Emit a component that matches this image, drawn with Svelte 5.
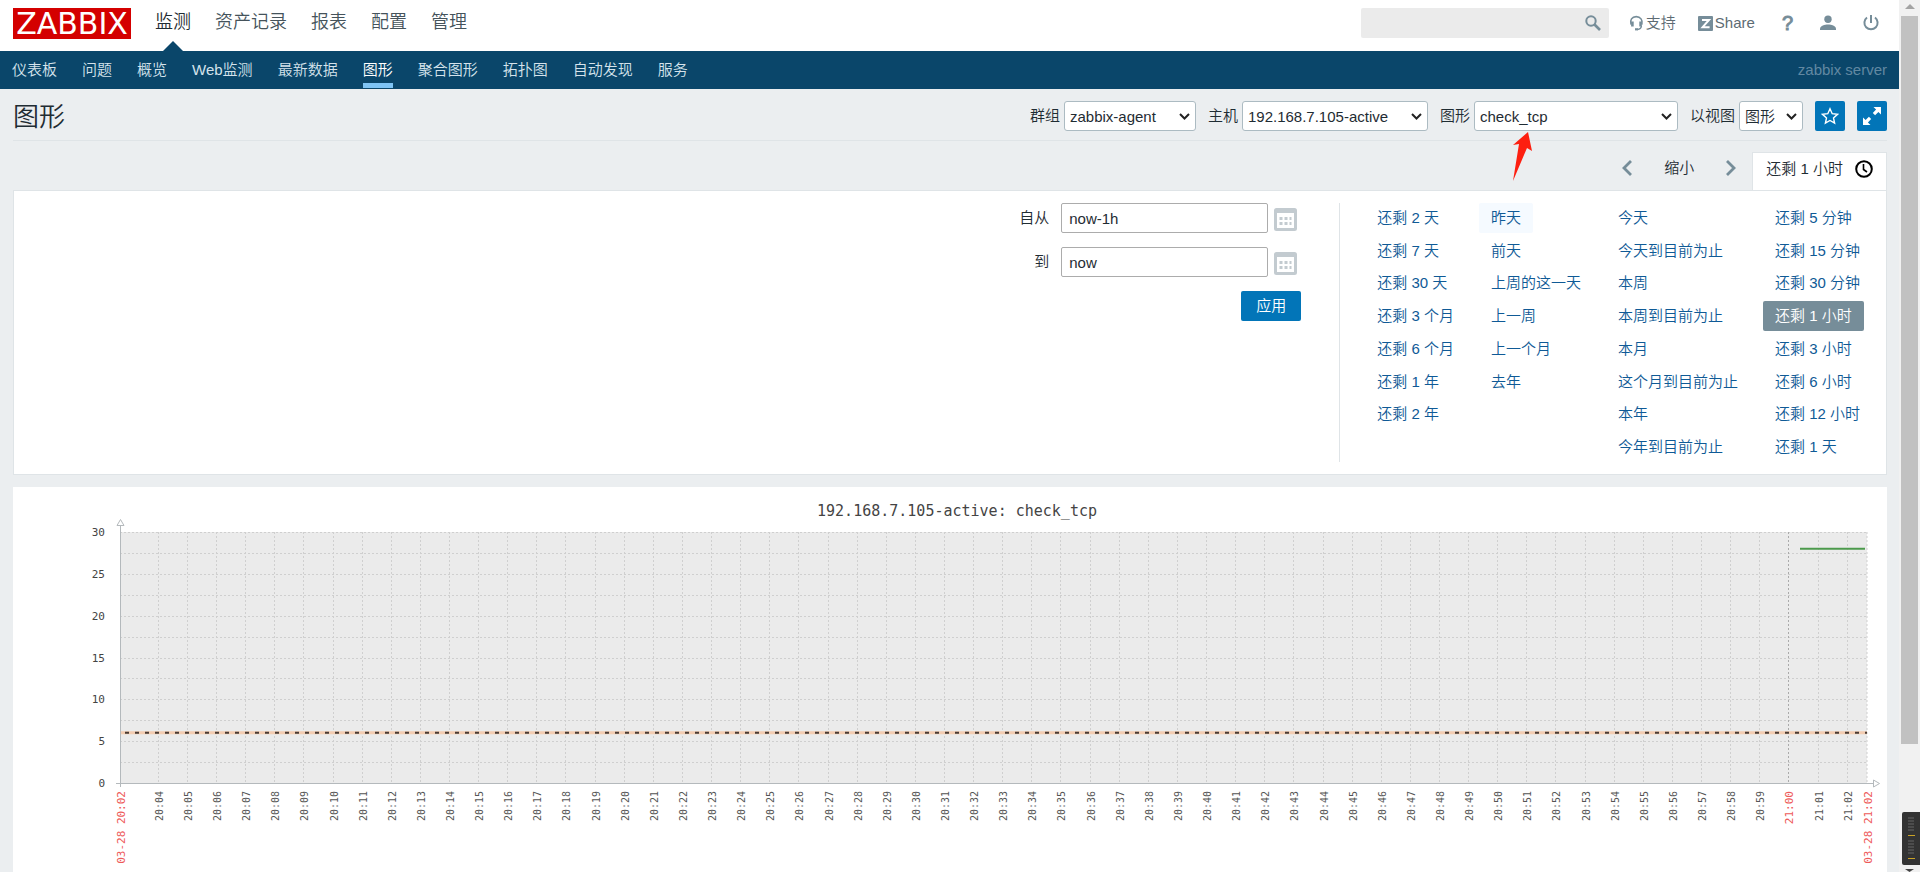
<script>
  const mainMenu = ["监测", "资产记录", "报表", "配置", "管理"];
  const subMenu = [
    "仪表板",
    "问题",
    "概览",
    "Web监测",
    "最新数据",
    "图形",
    "聚合图形",
    "拓扑图",
    "自动发现",
    "服务",
  ];

  const filters = [
    { id: "group", label: "群组", value: "zabbix-agent" },
    { id: "host", label: "主机", value: "192.168.7.105-active" },
    { id: "graph", label: "图形", value: "check_tcp" },
    { id: "view", label: "以视图", value: "图形" },
  ];

  const periods = [
    ["还剩 2 天", "还剩 7 天", "还剩 30 天", "还剩 3 个月", "还剩 6 个月", "还剩 1 年", "还剩 2 年"],
    ["昨天", "前天", "上周的这一天", "上一周", "上一个月", "去年"],
    ["今天", "今天到目前为止", "本周", "本周到目前为止", "本月", "这个月到目前为止", "本年", "今年到目前为止"],
    ["还剩 5 分钟", "还剩 15 分钟", "还剩 30 分钟", "还剩 1 小时", "还剩 3 小时", "还剩 6 小时", "还剩 12 小时", "还剩 1 天"],
  ];

  let from = $state("now-1h");
  let to = $state("now");
  let period = $state("还剩 1 小时");

  // graph geometry
  let graphWidth = $state(1874);
  const left = 107;
  const top = 45;
  const bottom = 296;
  let right = $derived(graphWidth - 20);
  let minute = $derived((right - left) / 60);

  const y = (v) => bottom - (v * (bottom - top)) / 30;
  const pad = (n) => String(n).padStart(2, "0");

  const rows = Array.from({ length: 12 }, (_, i) => (i + 1) * 2.5);
  const scale = [0, 5, 10, 15, 20, 25, 30];

  // one tick per minute, 20:04 - 21:02
  let ticks = $derived(
    Array.from({ length: 59 }, (_, i) => {
      const m = 20 * 60 + 4 + i;
      return {
        x: Math.round(left + (i + 1.3) * minute) + 0.5,
        text: `${pad(Math.floor(m / 60))}:${pad(m % 60)}`,
        major: m % 60 === 0,
      };
    })
  );
</script>

<div class="window">
  <div class="page">
    <header>
      <a class="logo" href="#home">ZABBIX</a>
      <nav class="main-menu">
        {#each mainMenu as item, i}
          <a href="#main" class:active={i === 0}>{item}</a>
        {/each}
      </nav>
      <div class="user-tools">
        <form class="search">
          <input type="text" aria-label="search" />
          <button type="button" aria-label="search">
            <svg width="16" height="16" viewBox="0 0 16 16">
              <circle cx="6" cy="6" r="4.7" fill="none" stroke="#768d99" stroke-width="2" />
              <path d="M9.5 9.5L15 15" stroke="#768d99" stroke-width="2.6" />
            </svg>
          </button>
        </form>
        <a class="support" href="#support">
          <svg width="15" height="16" viewBox="0 0 15 16" fill="none" stroke="#768d99">
            <path d="M2 9.5C.6 5 3 1.6 7.2 1.6S14 5 12.9 9.5" stroke-width="1.6" />
            <path d="M3.4 6.6v5M11.6 6.6v5" stroke-width="2.6" />
            <path d="M12.4 11c-.3 2.4-1.6 3.3-4 3.4" stroke-width="1.5" />
            <path d="M6 14.3h3" stroke-width="2.2" />
          </svg>支持
        </a>
        <a class="share" href="#share">
          <svg width="15" height="15" viewBox="0 0 15 15">
            <rect width="15" height="15" rx="1" fill="#768d99" />
            <path d="M4 4h7L4.6 11.2h7" fill="none" stroke="#fff" stroke-width="2" />
          </svg>Share
        </a>
        <a class="help" href="#help">?</a>
        <a href="#profile" aria-label="profile">
          <svg width="16" height="16" viewBox="0 0 16 16" fill="#768d99">
            <circle cx="8" cy="4.2" r="3.7" />
            <path d="M0 15v-1.5C.5 10.8 4.5 9.6 8 9.6s7.5 1.2 8 3.9V15z" />
          </svg>
        </a>
        <a href="#logout" aria-label="logout">
          <svg width="16" height="16" viewBox="0 0 16 16" fill="none" stroke="#768d99" stroke-width="2">
            <path d="M4 2.5a6.6 6.6 0 1 0 8 0M8 0v8" />
          </svg>
        </a>
      </div>
    </header>

    <nav class="sub-menu">
      {#each subMenu as item}
        <a href="#sub" class:active={item === "图形"}>{item}</a>
      {/each}
      <span class="server">zabbix server</span>
    </nav>

    <main>
      <div class="title-row">
        <h1>图形</h1>
        <form class="filters">
          {#each filters as f}
            <div class="filter">
              <label for={f.id}>{f.label}</label>
              <span class="select {f.id}">
                <select id={f.id}>
                  <option>{f.value}</option>
                </select>
                <svg width="11" height="7" viewBox="0 0 11 7">
                  <path d="M1 1l4.5 4.5L10 1" fill="none" stroke="#222" stroke-width="2" />
                </svg>
              </span>
              {#if f.id === "graph"}
                <svg class="pointer" width="20" height="52" viewBox="0 0 20 52">
                  <path d="M16 1L1 14l6-1L1 50 15 17l5 3z" fill="#fd1f10" />
                </svg>
              {/if}
            </div>
          {/each}
          <button type="button" class="icon-btn" aria-label="favourite">
            <svg width="18" height="18" viewBox="0 0 18 18">
              <path
                d="M9 1.8l2.2 4.9 5.3.6-4 3.6 1.1 5.2L9 13.5l-4.600 2.600 1.100-5.200-4-3.600 5.300-.6z"
                fill="none"
                stroke="#fff"
                stroke-width="1.4"
              />
            </svg>
          </button>
          <button type="button" class="icon-btn" aria-label="fullscreen">
            <svg width="18" height="18" viewBox="0 0 18 18" fill="#fff">
              <path d="M10.5 0H18v7.5l-2.600-2.600-3.300 3.300-2.300-2.300 3.300-3.300zM7.500 18H0v-7.500l2.600 2.600 3.300-3.300 2.300 2.300-3.300 3.300z" />
            </svg>
          </button>
        </form>
      </div>

      <div class="time-tabs">
        <button type="button" aria-label="previous">
          <svg width="10" height="16" viewBox="0 0 10 16">
            <path d="M9 1L2 8l7 7" fill="none" stroke="#768d99" stroke-width="2.8" />
          </svg>
        </button>
        <button type="button">缩小</button>
        <button type="button" aria-label="next">
          <svg width="10" height="16" viewBox="0 0 10 16">
            <path d="M1 1l7 7-7 7" fill="none" stroke="#768d99" stroke-width="2.8" />
          </svg>
        </button>
        <a class="time-tab" href="#time">
          {period}
          <svg width="18" height="18" viewBox="0 0 18 18" fill="none" stroke="#000" stroke-width="2">
            <circle cx="9" cy="9" r="7.8" />
            <path d="M8.5 4v5.5l3.5 2.5" stroke-width="1.6" />
          </svg>
        </a>
      </div>

      <section class="time-panel">
        <form class="range">
          <label for="from">自从</label>
          <input id="from" type="text" bind:value={from} />
          {@render calendar()}
          <label for="to">到</label>
          <input id="to" type="text" bind:value={to} />
          {@render calendar()}
          <button type="button" class="apply">应用</button>
        </form>
        <div class="periods">
          {#each periods as column}
            <ul>
              {#each column as p}
                <li>
                  <a
                    href="#period"
                    class:selected={p === period}
                    class:hovered={p === "昨天"}
                    onclick={() => (period = p)}>{p}</a
                  >
                </li>
              {/each}
            </ul>
          {/each}
        </div>
      </section>

      <section class="graph" bind:clientWidth={graphWidth}>
        <svg width={graphWidth} height="400">
          <text class="graph-title" x={graphWidth / 2 + 7} y="29">192.168.7.105-active: check_tcp</text>
          <rect x={left} y={top} width={right - left} height={bottom - top} fill="#ebebeb" />

          {#each rows as v}
            <line class="grid" x1={left} x2={right} y1={Math.round(y(v)) + 0.5} y2={Math.round(y(v)) + 0.5} />
          {/each}
          {#each ticks as t}
            <line class="grid" class:major={t.major} x1={t.x} x2={t.x} y1={top} y2={bottom} />
            <text
              class="tick"
              class:major={t.major}
              transform="translate({t.x + 4} {bottom + 8}) rotate(-90)">{t.text}</text
            >
          {/each}
          <line class="grid" x1={right} x2={right} y1={top} y2={bottom} />

          {#each scale as v}
            <text class="value" x="92" y={Math.round(y(v)) + 4}>{v}</text>
          {/each}

          <text class="tick major" transform="translate({left + 5} {bottom + 8}) rotate(-90)">03-28 20:02</text>
          <text class="tick major" transform="translate({right + 5} {bottom + 8}) rotate(-90)">03-28 21:02</text>

          <!-- trigger -->
          <line x1={left} x2={right} y1={y(6)} y2={y(6)} stroke="#f3cdb2" stroke-width="3" />
          <line
            x1={left + 5}
            x2={right}
            y1={y(6)}
            y2={y(6)}
            stroke="#4a3b33"
            stroke-width="2"
            stroke-dasharray="4 6"
          />
          <!-- data -->
          <line x1={right - 67} x2={right - 2} y1={y(28)} y2={y(28)} stroke="#4c9a4c" stroke-width="2" />

          <path class="axis" d="M{left}.5 38V{bottom + 4}M{left - 4} {bottom}.5H{right + 6}" />
          <path class="arrow" d="M{left - 3} 38.5h7l-3.5-6z" />
          <path class="arrow" d="M{right + 6}.5 {bottom - 3}v7l6-3.5z" />
        </svg>
      </section>
    </main>
  </div>

  <div class="scrollbar">
    <span class="scroll-up"></span>
    <span class="thumb"></span>
  </div>
  <svg class="meter" width="18" height="60" viewBox="0 0 18 60">
    <rect width="22" height="53" rx="2" fill="#333" />
    <path d="M6 6h6M6 9h6M6 12h6M6 15h6M6 18h6M6 29h6M6 32h6M6 35h6M6 38h6M6 41h6" stroke="#666" />
    <path d="M6 23.5h7M6 46.5h7" stroke="#c9a227" />
    <path d="M3 57h9l-4.5 3z" fill="#444" />
  </svg>
</div>

{#snippet calendar()}
  <button type="button" class="calendar" aria-label="calendar">
    <svg width="23" height="23" viewBox="0 0 23 23">
      <rect x="1.5" y="1.5" width="20" height="20" rx="1" fill="#fff" stroke="#c3cbd0" stroke-width="3" />
      <path d="M1 3h21" stroke="#c3cbd0" stroke-width="4" />
      <path d="M5.5 10.5h12M5.5 15.5h12" stroke="#c3cbd0" stroke-width="3" stroke-dasharray="3 2" />
    </svg>
  </button>
{/snippet}

<style>
  :global(body) {
    margin: 0;
    background: #ebeef0;
    color: #1f2c33;
    font-family: "Liberation Sans", "Noto Sans CJK SC", sans-serif;
    font-size: 15px;
    font-weight: 350;
    line-height: 20px;
  }

  .window {
    display: flex;
    height: 100vh;
    overflow: hidden;
  }

  .page {
    flex: 1;
    min-width: 0;
  }

  a {
    color: inherit;
    text-decoration: none;
  }

  button,
  input,
  select {
    font: inherit;
    color: inherit;
    box-sizing: border-box;
  }

  button {
    border: 0;
    padding: 0;
    background: none;
    cursor: pointer;
  }

  svg {
    display: block;
  }

  header {
    display: flex;
    align-items: flex-start;
    height: 51px;
    padding: 0 20px 0 13px;
    background: #fff;
    box-sizing: border-box;
  }

  .logo {
    width: 118px;
    height: 31px;
    margin: 8px 24px 0 0;
    background: #d40000;
    color: #fff;
    font-family: "DejaVu Sans", sans-serif;
    font-size: 30px;
    font-weight: 400;
    line-height: 31px;
    text-align: center;
  }

  .main-menu {
    display: flex;
    flex: 1;
    gap: 24px;
    font-size: 18px;
    color: #45535b;
  }

  .main-menu a {
    height: 51px;
    line-height: 45px;
  }

  .main-menu .active {
    position: relative;
    color: #1f2c33;
  }

  .main-menu .active::after {
    content: "";
    position: absolute;
    bottom: 0;
    left: 50%;
    margin-left: -10px;
    border: 10px solid transparent;
    border-top: 0;
    border-bottom-color: #0a466a;
  }

  .user-tools {
    display: flex;
    align-items: center;
    height: 30px;
    margin-top: 8px;
    color: #5d6b73;
  }

  .user-tools a {
    margin-right: 27px;
  }

  .user-tools a:last-child {
    margin-right: 0;
  }

  .search {
    display: flex;
    align-items: center;
    width: 248px;
    margin-right: 20px;
    background: #ebebeb;
    border-radius: 2px;
  }

  .search input {
    flex: 1;
    min-width: 0;
    height: 30px;
    border: 0;
    background: none;
  }

  .search button {
    margin-right: 8px;
  }

  .support,
  .share {
    display: flex;
    align-items: center;
    gap: 2px;
  }

  .user-tools .support {
    margin-right: 22px;
  }

  .user-tools .help {
    color: #768d99;
    font-size: 20px;
    -webkit-text-stroke: 1px #768d99;
  }

  .sub-menu {
    display: flex;
    gap: 25px;
    height: 38px;
    padding: 0 12px;
    background: #0a466a;
    color: #d5e3ec;
    line-height: 37px;
  }

  .sub-menu .active {
    height: 32px;
    border-bottom: 5px solid #7ec4f5;
    color: #fff;
  }

  .server {
    margin-left: auto;
    color: #6289a2;
  }

  main {
    padding: 0 12px 0 13px;
  }

  .title-row {
    display: flex;
    justify-content: space-between;
    height: 51px;
    border-bottom: 1px solid #dfe4e7;
  }

  h1 {
    margin: 0;
    font-size: 26px;
    font-weight: 350;
    line-height: 57px;
  }

  .filters {
    display: flex;
    gap: 12px;
    padding-top: 12px;
  }

  .filter {
    position: relative;
    display: flex;
    gap: 4px;
    height: 30px;
    line-height: 30px;
  }

  .select {
    position: relative;
  }

  .select svg {
    position: absolute;
    top: 12px;
    right: 6px;
    pointer-events: none;
  }

  select {
    appearance: none;
    width: 100%;
    height: 30px;
    padding: 0 5px;
    border: 1px solid #acbbc2;
    border-radius: 3px;
    background: #fff;
  }

  .group {
    width: 132px;
  }

  .host {
    width: 186px;
  }

  .select.graph {
    width: 204px;
  }

  .view {
    width: 64px;
  }

  /* marker over the graph selector */
  .pointer {
    position: absolute;
    top: 30px;
    left: 72px;
    z-index: 1;
  }

  .icon-btn {
    display: flex;
    align-items: center;
    justify-content: center;
    width: 30px;
    height: 30px;
    background: #0275b8;
    border-radius: 2px;
  }

  .time-tabs {
    display: flex;
    justify-content: flex-end;
    padding-top: 11px;
  }

  .time-tabs button {
    padding: 0 16px 6px;
  }

  .time-tab {
    display: flex;
    align-items: center;
    gap: 12px;
    height: 38px;
    padding: 0 13px 6px;
    background: #fff;
    border: 1px solid #dfe4e7;
    border-bottom: 0;
    box-sizing: border-box;
  }

  .time-panel {
    display: flex;
    justify-content: flex-end;
    padding: 12px 12px 12px 0;
    background: #fff;
    border: 1px solid #dfe4e7;
  }

  .range {
    display: grid;
    grid-template-columns: auto 207px 27px;
    grid-template-rows: 30px 30px 30px;
    gap: 14px 6px;
    align-content: start;
    padding-right: 38px;
  }

  .range label {
    padding-right: 6px;
    line-height: 30px;
    text-align: right;
  }

  .range input {
    height: 30px;
    padding: 0 7px;
    border: 1px solid #acacac;
    border-radius: 2px;
  }

  .calendar {
    align-self: end;
    padding-bottom: 2px;
  }

  .apply {
    grid-column: 2 / 4;
    justify-self: end;
    width: 60px;
    height: 30px;
    background: #0275b8;
    border-radius: 2px;
    color: #fff;
  }

  .periods {
    display: flex;
    height: 259px;
    padding-left: 25px;
    border-left: 1px solid #dfe4e7;
  }

  ul {
    display: grid;
    grid-template-rows: repeat(8, 30px);
    align-content: space-between;
    margin: 0;
    padding: 0 13px 0 0;
    list-style: none;
  }

  ul:last-child {
    padding: 0 2px 0 0;
  }

  li a {
    display: inline-block;
    padding: 0 12px;
    border-radius: 2px;
    color: #0f5a96;
    line-height: 30px;
  }

  li .selected {
    background: #768d99;
    color: #fff;
  }

  li .hovered {
    background: #f5faff;
  }

  section.graph {
    margin-top: 12px;
    background: #fff;
  }

  .graph text {
    font-family: "DejaVu Sans Mono", monospace;
    font-weight: 400;
  }

  .graph-title {
    font-size: 15px;
    text-anchor: middle;
    fill: #444;
  }

  .grid {
    stroke: #cfcfcf;
    stroke-dasharray: 2 2;
  }

  .grid.major {
    stroke: #aaa;
  }

  .tick {
    fill: #555;
    font-size: 10px;
    text-anchor: end;
  }

  .tick.major {
    fill: #ee5a5a;
    font-size: 11px;
  }

  .value {
    fill: #444;
    font-size: 11px;
    text-anchor: end;
  }

  .axis {
    fill: none;
    stroke: #b4b9bc;
  }

  .arrow {
    fill: #fff;
    stroke: #b4b9bc;
  }

  .scrollbar {
    display: flex;
    flex-direction: column;
    align-items: center;
    width: 21px;
    background: #f1f1f1;
  }

  .scroll-up {
    margin: 4px 0 7px;
    border: 5px solid transparent;
    border-top: 0;
    border-bottom-color: #a3a3a3;
  }

  .thumb {
    width: 17px;
    height: calc(84vh - 4px);
    background: #c1c1c1;
  }

  .meter {
    position: fixed;
    right: 0;
    bottom: 0;
  }
</style>
